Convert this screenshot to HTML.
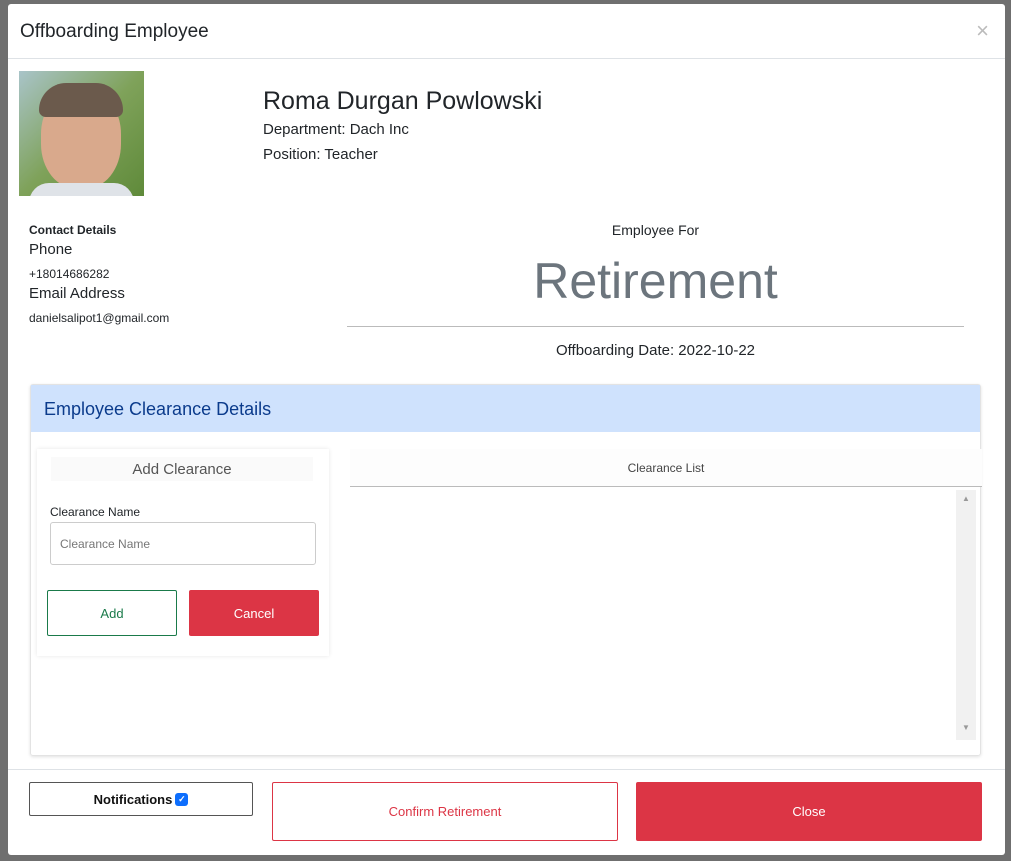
<!DOCTYPE html>
<html><head><style>
*{box-sizing:border-box;margin:0;padding:0}
body{width:1011px;height:861px;background:#6f6f6f;font-family:"Liberation Sans",sans-serif;color:#212529;position:relative;overflow:hidden}
.m{position:absolute;left:8px;top:4px;width:997px;height:851px;background:#fff;border-radius:3px}
.a{position:absolute}
.btn{position:absolute;display:flex;align-items:center;justify-content:center;font-size:13px;border-radius:2px}
</style></head><body>
<div class="m">
<div class="a" style="left:12px;top:17px;font-size:19px">Offboarding Employee</div>
<div class="a" style="right:16px;top:14px;font-size:22px;color:#bbb">×</div>
<div class="a" style="left:0;top:54px;width:997px;height:1px;background:#dee2e6"></div>
<div class="a" style="left:11px;top:67px;width:125px;height:125px;background:linear-gradient(135deg,#a9c4c9 0%,#7fa25a 50%,#5f8a3a 100%);overflow:hidden">
<div class="a" style="left:22px;top:18px;width:80px;height:100px;border-radius:45%;background:#d9a98c"></div>
<div class="a" style="left:20px;top:12px;width:84px;height:34px;border-radius:40px 40px 10px 10px;background:#6b5a4c"></div>
<div class="a" style="left:10px;top:112px;width:105px;height:20px;border-radius:20px 20px 0 0;background:#dfe3e8"></div>
</div>
<div class="a" style="left:255px;top:83px;font-size:25px">Roma Durgan Powlowski</div>
<div class="a" style="left:255px;top:117px;font-size:15px">Department: Dach Inc</div>
<div class="a" style="left:255px;top:142px;font-size:15px">Position: Teacher</div>
<div class="a" style="left:21px;top:219px;font-size:12px;font-weight:bold">Contact Details</div>
<div class="a" style="left:21px;top:237px;font-size:15px">Phone</div>
<div class="a" style="left:21px;top:263px;font-size:12px">+18014686282</div>
<div class="a" style="left:21px;top:281px;font-size:15px">Email Address</div>
<div class="a" style="left:21px;top:307px;font-size:12px">danielsalipot1@gmail.com</div>
<div class="a" style="left:339px;top:218px;width:617px;text-align:center;font-size:14px">Employee For</div>
<div class="a" style="left:339px;top:248px;width:617px;text-align:center;font-size:50px;font-weight:300;color:#6c757d">Retirement</div>
<div class="a" style="left:339px;top:322px;width:617px;height:1px;background:#bbb"></div>
<div class="a" style="left:339px;top:338px;width:617px;text-align:center;font-size:15px">Offboarding Date: 2022-10-22</div>
<div class="a" style="left:22px;top:380px;width:951px;height:372px;border:1px solid #e3e3e3;box-shadow:0 1px 3px rgba(0,0,0,.12);border-radius:3px">
 <div class="a" style="left:0;top:0;width:949px;height:47px;background:#cfe2fd;padding:14px 13px;font-size:18px;color:#0b3b8c">Employee Clearance Details</div>
 <div class="a" style="left:6px;top:64px;width:292px;height:207px;box-shadow:0 0 4px rgba(0,0,0,.1)">
  <div class="a" style="left:14px;top:8px;width:262px;height:24px;text-align:center;font-size:15px;color:#555;background:#fafafa;padding-top:4px">Add Clearance</div>
  <div class="a" style="left:13px;top:56px;font-size:12px">Clearance Name</div>
  <div class="a" style="left:13px;top:73px;width:266px;height:43px;border:1px solid #ccc;border-radius:3px;font-size:12px;color:#777;padding:14px 9px">Clearance Name</div>
  <div class="btn" style="left:10px;top:141px;width:130px;height:46px;border:1px solid #1a7a4a;color:#1a7a4a">Add</div>
  <div class="btn" style="left:152px;top:141px;width:130px;height:46px;background:#dc3545;color:#fff">Cancel</div>
 </div>
 <div class="a" style="left:319px;top:64px;width:632px;height:38px;text-align:center;font-size:12px;color:#444;padding-top:12px;border-bottom:1px solid #bbb;background:#fdfdfd">Clearance List</div>
 <div class="a" style="left:925px;top:105px;width:20px;height:250px;background:#f1f1f1;font-size:8px;color:#999;text-align:center"><div style="margin-top:4px">▲</div><div style="margin-top:220px">▼</div></div>
</div>
<div class="a" style="left:0;top:765px;width:997px;height:1px;background:#dee2e6"></div>
<div class="btn" style="left:21px;top:778px;width:224px;height:34px;border:1px solid #555;font-weight:bold;font-size:13px;color:#111">Notifications <span style="display:inline-block;width:13px;height:13px;background:#0d6efd;border-radius:3px;margin-left:3px;color:#fff;font-size:9px;text-align:center;line-height:13px">✓</span></div>
<div class="btn" style="left:264px;top:778px;width:346px;height:59px;border:1px solid #dc3545;color:#dc3545">Confirm Retirement</div>
<div class="btn" style="left:628px;top:778px;width:346px;height:59px;background:#dc3545;color:#fff">Close</div>
</div>
</body></html>
